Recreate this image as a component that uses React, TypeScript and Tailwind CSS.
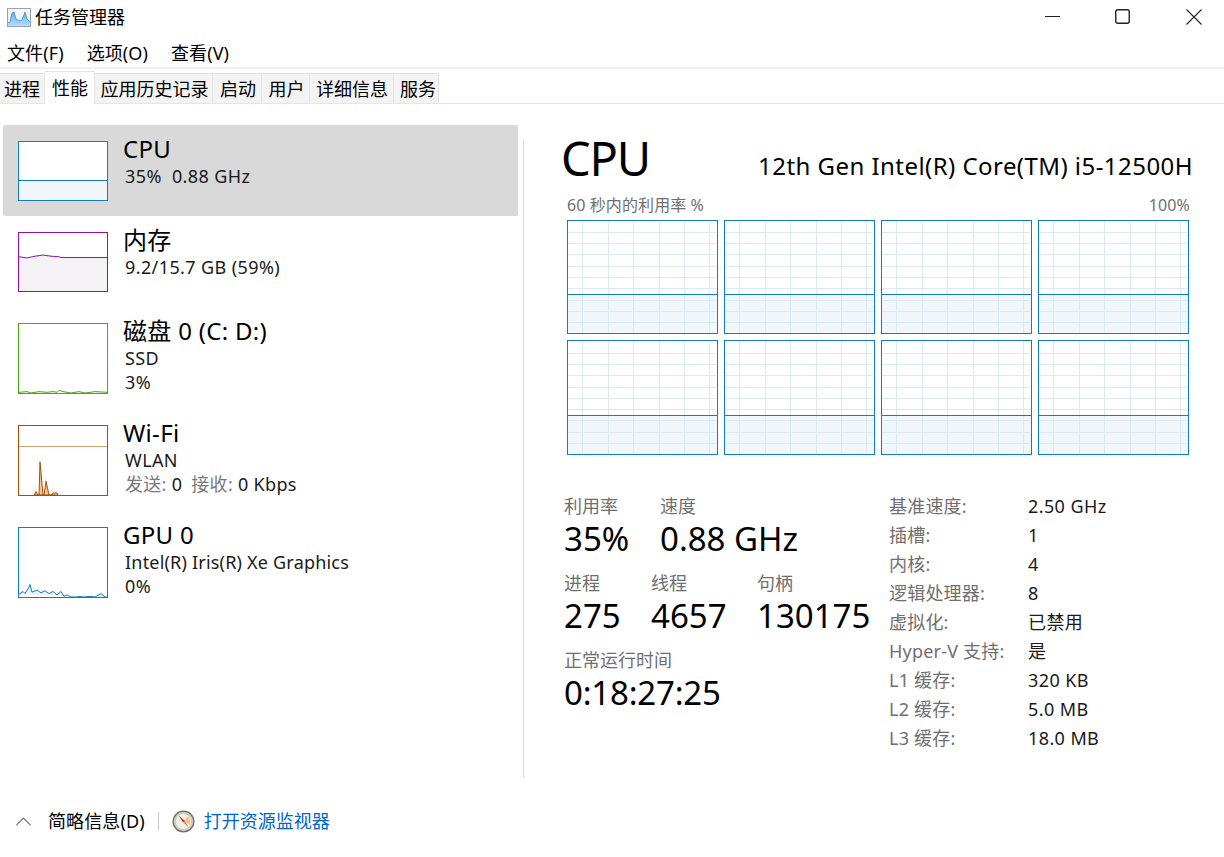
import { ChevronUp } from 'lucide-react'

const TABS = [
  { label: '进程', cls: 'w-[45px]' },
  { label: '性能', cls: 'w-[50px] pl-[1px]', active: true },
  { label: '应用历史记录', cls: 'w-[118px] pl-[2px]' },
  { label: '启动', cls: 'w-[49px] pl-[2px]' },
  { label: '用户', cls: 'w-[48px] pl-[2px]' },
  { label: '详细信息', cls: 'w-[84px] pl-[1px]' },
  { label: '服务', cls: 'w-[45px] pl-[4px]' },
]

const SPECS = [
  ['基准速度:', '2.50 GHz'],
  ['插槽:', '1'],
  ['内核:', '4'],
  ['逻辑处理器:', '8'],
  ['虚拟化:', '已禁用'],
  ['Hyper-V 支持:', '是'],
  ['L1 缓存:', '320 KB'],
  ['L2 缓存:', '5.0 MB'],
  ['L3 缓存:', '18.0 MB'],
]

const GRID_X = [15, 41, 66, 92, 117, 142]
const GRID_Y_TOP = [12, 23, 34, 46, 57, 68, 80, 91, 102]
const GRID_Y_BOTTOM = [13, 24, 35, 47, 58, 69, 80, 92, 103]

function AppIcon() {
  return (
    <svg width="24" height="19" viewBox="0 0 24 19" className="shrink-0">
      <defs>
        <linearGradient id="app-icon-fill" x1="0" y1="0" x2="0" y2="1">
          <stop offset="0" stopColor="#5aaef0" />
          <stop offset="1" stopColor="#b5e0fb" />
        </linearGradient>
      </defs>
      <rect x="0.5" y="0.5" width="23" height="18" fill="#f4f7fa" stroke="#9aa3ab" />
      <path d="M1 15l2-1 2-9 2-1 2 7 2 1 2 1 2-1 3-8 2 7 3 3v4H1z" fill="url(#app-icon-fill)" />
      <path d="M1 15l2-1 2-9 2-1 2 7 2 1 2 1 2-1 3-8 2 7 3 3" fill="none" stroke="#3f8fd0" strokeWidth="0.8" />
    </svg>
  )
}

function CompassIcon() {
  return (
    <svg width="23" height="23" viewBox="0 0 23 23" className="shrink-0 block">
      <circle cx="11.5" cy="11.5" r="11" fill="#6f6f68" />
      <circle cx="11.5" cy="11.5" r="9.7" fill="#cfcdc6" />
      <circle cx="11.5" cy="11.5" r="7.6" fill="#f4efe4" />
      <path d="M16 6.5a7 7 0 0 1 1.5 8l-6-3z" fill="#edc58f" />
      <path d="M6.5 5.5l6.5 5.5-1.8 1.5z" fill="#c8342a" />
      <path d="M16.5 17.5l-5.3-5 1.8-1.5z" fill="#cf8a78" />
    </svg>
  )
}

function Thumb({
  border,
  h = 'h-[60px]',
  children,
}: {
  border: string
  h?: string
  children?: React.ReactNode
}) {
  return (
    <div className={`w-[90px] ${h} border ${border} bg-white shrink-0`}>
      <svg width="88" height="100%" viewBox="0 0 88 100" preserveAspectRatio="none" className="block h-full">
        {children}
      </svg>
    </div>
  )
}

function SideRow({
  thumb,
  title,
  lines,
  selected,
  h,
}: {
  thumb: React.ReactNode
  title: string
  lines: React.ReactNode[]
  selected?: boolean
  h: string
}) {
  return (
    <div className={`flex ${h} pl-[15px] pt-[16px] rounded-[2px] ${selected ? 'bg-[#d9d9d9]' : ''}`}>
      {thumb}
      <div className="ml-[15px] flex flex-col">
        <div className="text-[24px] leading-[24px] -mt-[4px] mb-[3px] text-black tracking-[0.3px] whitespace-nowrap">{title}</div>
        {lines.map((l, i) => (
          <div key={i} className="ml-[2px] text-[18px] leading-[24px] text-[#1a1a1a] tracking-[0.4px] whitespace-pre">
            {l}
          </div>
        ))}
      </div>
    </div>
  )
}

function CoreChart({ line, height, gridY }: { line: number; height: number; gridY: number[] }) {
  return (
    <svg width="151" height={height} viewBox={`0 0 151 ${height}`} className="block" shapeRendering="crispEdges">
      <rect x="0" y="0" width="151" height={height} fill="#fff" />
      <rect x="0" y={line} width="151" height={height - line} fill="#f1f6fa" />
      {GRID_X.map((x) => (
        <line key={x} x1={x + 0.5} x2={x + 0.5} y1="1" y2={height - 1} stroke="#d9eaf4" />
      ))}
      {gridY.map((y) => (
        <line key={y} x1="1" x2="149" y1={y + 0.5} y2={y + 0.5} stroke="#d9eaf4" />
      ))}
      <line x1="1" x2="150" y1={line + 0.5} y2={line + 0.5} stroke="#117dbb" />
      <rect x="0.5" y="0.5" width="150" height={height - 1} fill="none" stroke="#117dbb" />
    </svg>
  )
}

function Stat({ label, value, w, tight }: { label: string; value: string; w?: string; tight?: boolean }) {
  return (
    <div className={`flex flex-col ${w ?? ''}`}>
      <div className="text-[18px] leading-[24px] text-[#6f6f6f]">{label}</div>
      <div className={`text-[33px] leading-[42px] text-black whitespace-nowrap ${tight ? 'tracking-[-0.2px]' : ''}`}>{value}</div>
    </div>
  )
}

export default function App() {
  return (
    <div className="w-[1224px] h-[857px] overflow-hidden bg-white flex flex-col text-black font-['Noto_Sans','Noto_Sans_CJK_SC',sans-serif]">
      {/* title bar */}
      <div className="h-[34px] flex items-center pl-[7px] shrink-0">
        <AppIcon />
        <span className="ml-[4px] text-[18px] leading-[24px]">任务管理器</span>
        <div className="ml-auto flex items-center pb-[1px] text-[#222]">
          <svg width="15" height="15" viewBox="0 0 15 15" className="mr-[55px]">
            <path d="M0 7.5h15" stroke="currentColor" />
          </svg>
          <svg width="15" height="15" viewBox="0 0 15 15" className="mr-[56px]">
            <rect x="0.75" y="0.75" width="13.5" height="13.5" rx="2" fill="none" stroke="currentColor" strokeWidth="1.4" />
          </svg>
          <svg width="16" height="16" viewBox="0 0 16 16" className="mr-[22px]">
            <path d="M0.5 0.5l15 15M15.5 0.5l-15 15" stroke="currentColor" strokeWidth="1.1" />
          </svg>
        </div>
      </div>

      {/* menu */}
      <div className="h-[35px] flex items-center pl-[7px] pt-[5px] gap-[23px] text-[18px] border-b-2 border-[#f0f0f0] shrink-0 tracking-[0.1px]">
        <span>文件(F)</span>
        <span>选项(O)</span>
        <span>查看(V)</span>
      </div>

      {/* tabs */}
      <div className="h-[35px] flex items-end border-b border-[#e5e5e5] shrink-0">
        {TABS.map((t) => (
          <div
            key={t.label}
            className={`${t.cls} flex items-center justify-center text-[18px] border-r border-t border-[#e3e3e3] ${
              t.active ? 'h-[33px] -mb-px bg-white' : 'h-[30px] pt-[2px] bg-[#f3f3f3]'
            }`}
          >
            {t.label}
          </div>
        ))}
      </div>

      {/* body */}
      <div className="flex-1 flex min-h-0">
        <div className="w-[523px] pt-[21px] pl-[3px] pr-[5px] shrink-0">
          <SideRow
            selected
            h="h-[91px]"
            title="CPU"
            lines={['35%  0.88 GHz']}
            thumb={
              <Thumb border="border-[#117dbb]">
                <rect x="0" y="66.4" width="88" height="33.6" fill="#f1f6fa" />
                <line x1="0" x2="88" y1="66.38" y2="66.38" stroke="#117dbb" vectorEffect="non-scaling-stroke" />
              </Thumb>
            }
          />
          <SideRow
            h="h-[91px]"
            title="内存"
            lines={['9.2/15.7 GB (59%)']}
            thumb={
              <Thumb border="border-[#8b12ae]">
                <path d="M0 41L8 43 16 40 24 38 32 40 40 41 42 42.24 88 42.24V100H0z" fill="#f4f2f4" />
                <path d="M0 41L8 43 16 40 24 38 32 40 40 41 42 42.24 88 42.24" fill="none" stroke="#8b12ae" vectorEffect="non-scaling-stroke" />
              </Thumb>
            }
          />
          <SideRow
            h="h-[102px]"
            title="磁盘 0 (C: D:)"
            lines={['SSD', '3%']}
            thumb={
              <Thumb border="border-[#4da60c]" h="h-[71px]">
                <path
                  d="M0 99L8 98 12 100 20 98 28 99 34 98 38 99 40 96 44 98 52 100 60 98 66 100 76 98 88 99"
                  fill="none"
                  stroke="#4da60c"
                  vectorEffect="non-scaling-stroke"
                />
              </Thumb>
            }
          />
          <SideRow
            h="h-[102px]"
            title="Wi-Fi"
            lines={[
              'WLAN',
              <span className="tracking-[0.3px]">
                <span className="text-[#7a7a7a]">发送:</span> 0 <span className="ml-1 text-[#7a7a7a]">接收:</span> 0 Kbps
              </span>,
            ]}
            thumb={
              <Thumb border="border-[#a74f01]" h="h-[71px]">
                <line x1="0" x2="88" y1="29.71" y2="29.71" stroke="#d3a273" vectorEffect="non-scaling-stroke" />
                <path
                  d="M15 100L17 95 19 100 20 100 21 52 24 100 25 100 27 80 30 100 33 100 34 97 38 97 39 100z"
                  fill="#e6c7a6"
                  stroke="#a74f01"
                  vectorEffect="non-scaling-stroke"
                />
              </Thumb>
            }
          />
          <SideRow
            h="h-[102px]"
            title="GPU 0"
            lines={[<span className="tracking-[0.2px]">Intel(R) Iris(R) Xe Graphics</span>, '0%']}
            thumb={
              <Thumb border="border-[#117dbb]" h="h-[71px]">
                <path
                  d="M0 96L4 92 6 95 10 86 11 82 13 93 18 90 22 94 26 91 30 95 34 92 38 97 42 92 45 99 48 97 52 100 58 100 60 99 64 100 72 99 76 100 82 95 86 100 88 100"
                  fill="#eaf3f9"
                  stroke="#117dbb"
                  vectorEffect="non-scaling-stroke"
                />
              </Thumb>
            }
          />
        </div>

        <div className="w-px h-[638px] mt-[36px] bg-[#d9d9d9] shrink-0" />

        <div className="w-[630px] ml-[38px] shrink-0 flex flex-col">
          <div className="h-[93px] flex items-start justify-between -mr-[1px]">
            <span className="mt-[24px] -ml-[1px] text-[47px] leading-[60px] tracking-[-1.2px]">CPU</span>
            <span className="mt-[47px] text-[24px] leading-[30px] tracking-[0.45px] whitespace-nowrap">
              12th Gen Intel(R) Core(TM) i5-12500H
            </span>
          </div>
          <div className="flex justify-between text-[16px] leading-[24px] text-[#6f6f6f] mt-[-4px] pl-[5px] pr-[2px] tracking-[0.1px]">
            <span>60 秒内的利用率 %</span>
            <span>100%</span>
          </div>
          <div className="ml-[5px] w-[622px] grid grid-cols-4 grid-rows-[114px_115px] gap-[6px] mt-[3px]">
            {[0, 1, 2, 3].map((i) => (
              <CoreChart key={i} line={74} height={114} gridY={GRID_Y_TOP} />
            ))}
            {[4, 5, 6, 7].map((i) => (
              <CoreChart key={i} line={75} height={115} gridY={GRID_Y_BOTTOM} />
            ))}
          </div>

          <div className="flex mt-[39px]">
            <div className="w-[325px] ml-[2px] shrink-0 flex flex-col gap-[11px]">
              <div className="flex">
                <Stat label="利用率" value="35%" w="w-[96px]" />
                <Stat label="速度" value="0.88 GHz" />
              </div>
              <div className="flex">
                <Stat label="进程" value="275" w="w-[87px]" />
                <Stat label="线程" value="4657" w="w-[106px]" />
                <Stat label="句柄" value="130175" />
              </div>
              <Stat label="正常运行时间" value="0:18:27:25" tight />
            </div>
            <div className="-mt-[3px] grid grid-cols-[139px_1fr] auto-rows-[29px] items-center text-[18px] leading-[24px]">
              {SPECS.map(([k, v]) => (
                <div key={k} className="contents">
                  <span className="text-[#6f6f6f] whitespace-nowrap tracking-[0.2px]">{k}</span>
                  <span className="text-[#1a1a1a] whitespace-nowrap tracking-[0.4px]">{v}</span>
                </div>
              ))}
            </div>
          </div>
        </div>
      </div>

      {/* footer */}
      <div className="h-[79px] shrink-0 flex items-center pl-[10px] pt-[7px] text-[18px]">
        <ChevronUp className="w-[27px] h-[27px] text-[#707070]" strokeWidth={1.1} />
        <span className="ml-[11px] tracking-[0.1px]">简略信息(D)</span>
        <span className="ml-[13px] w-px h-[18px] bg-[#c8c8c8]" />
        <span className="ml-[13px]">
          <CompassIcon />
        </span>
        <span className="ml-[9px] text-[#0066cc]">打开资源监视器</span>
      </div>
    </div>
  )
}
